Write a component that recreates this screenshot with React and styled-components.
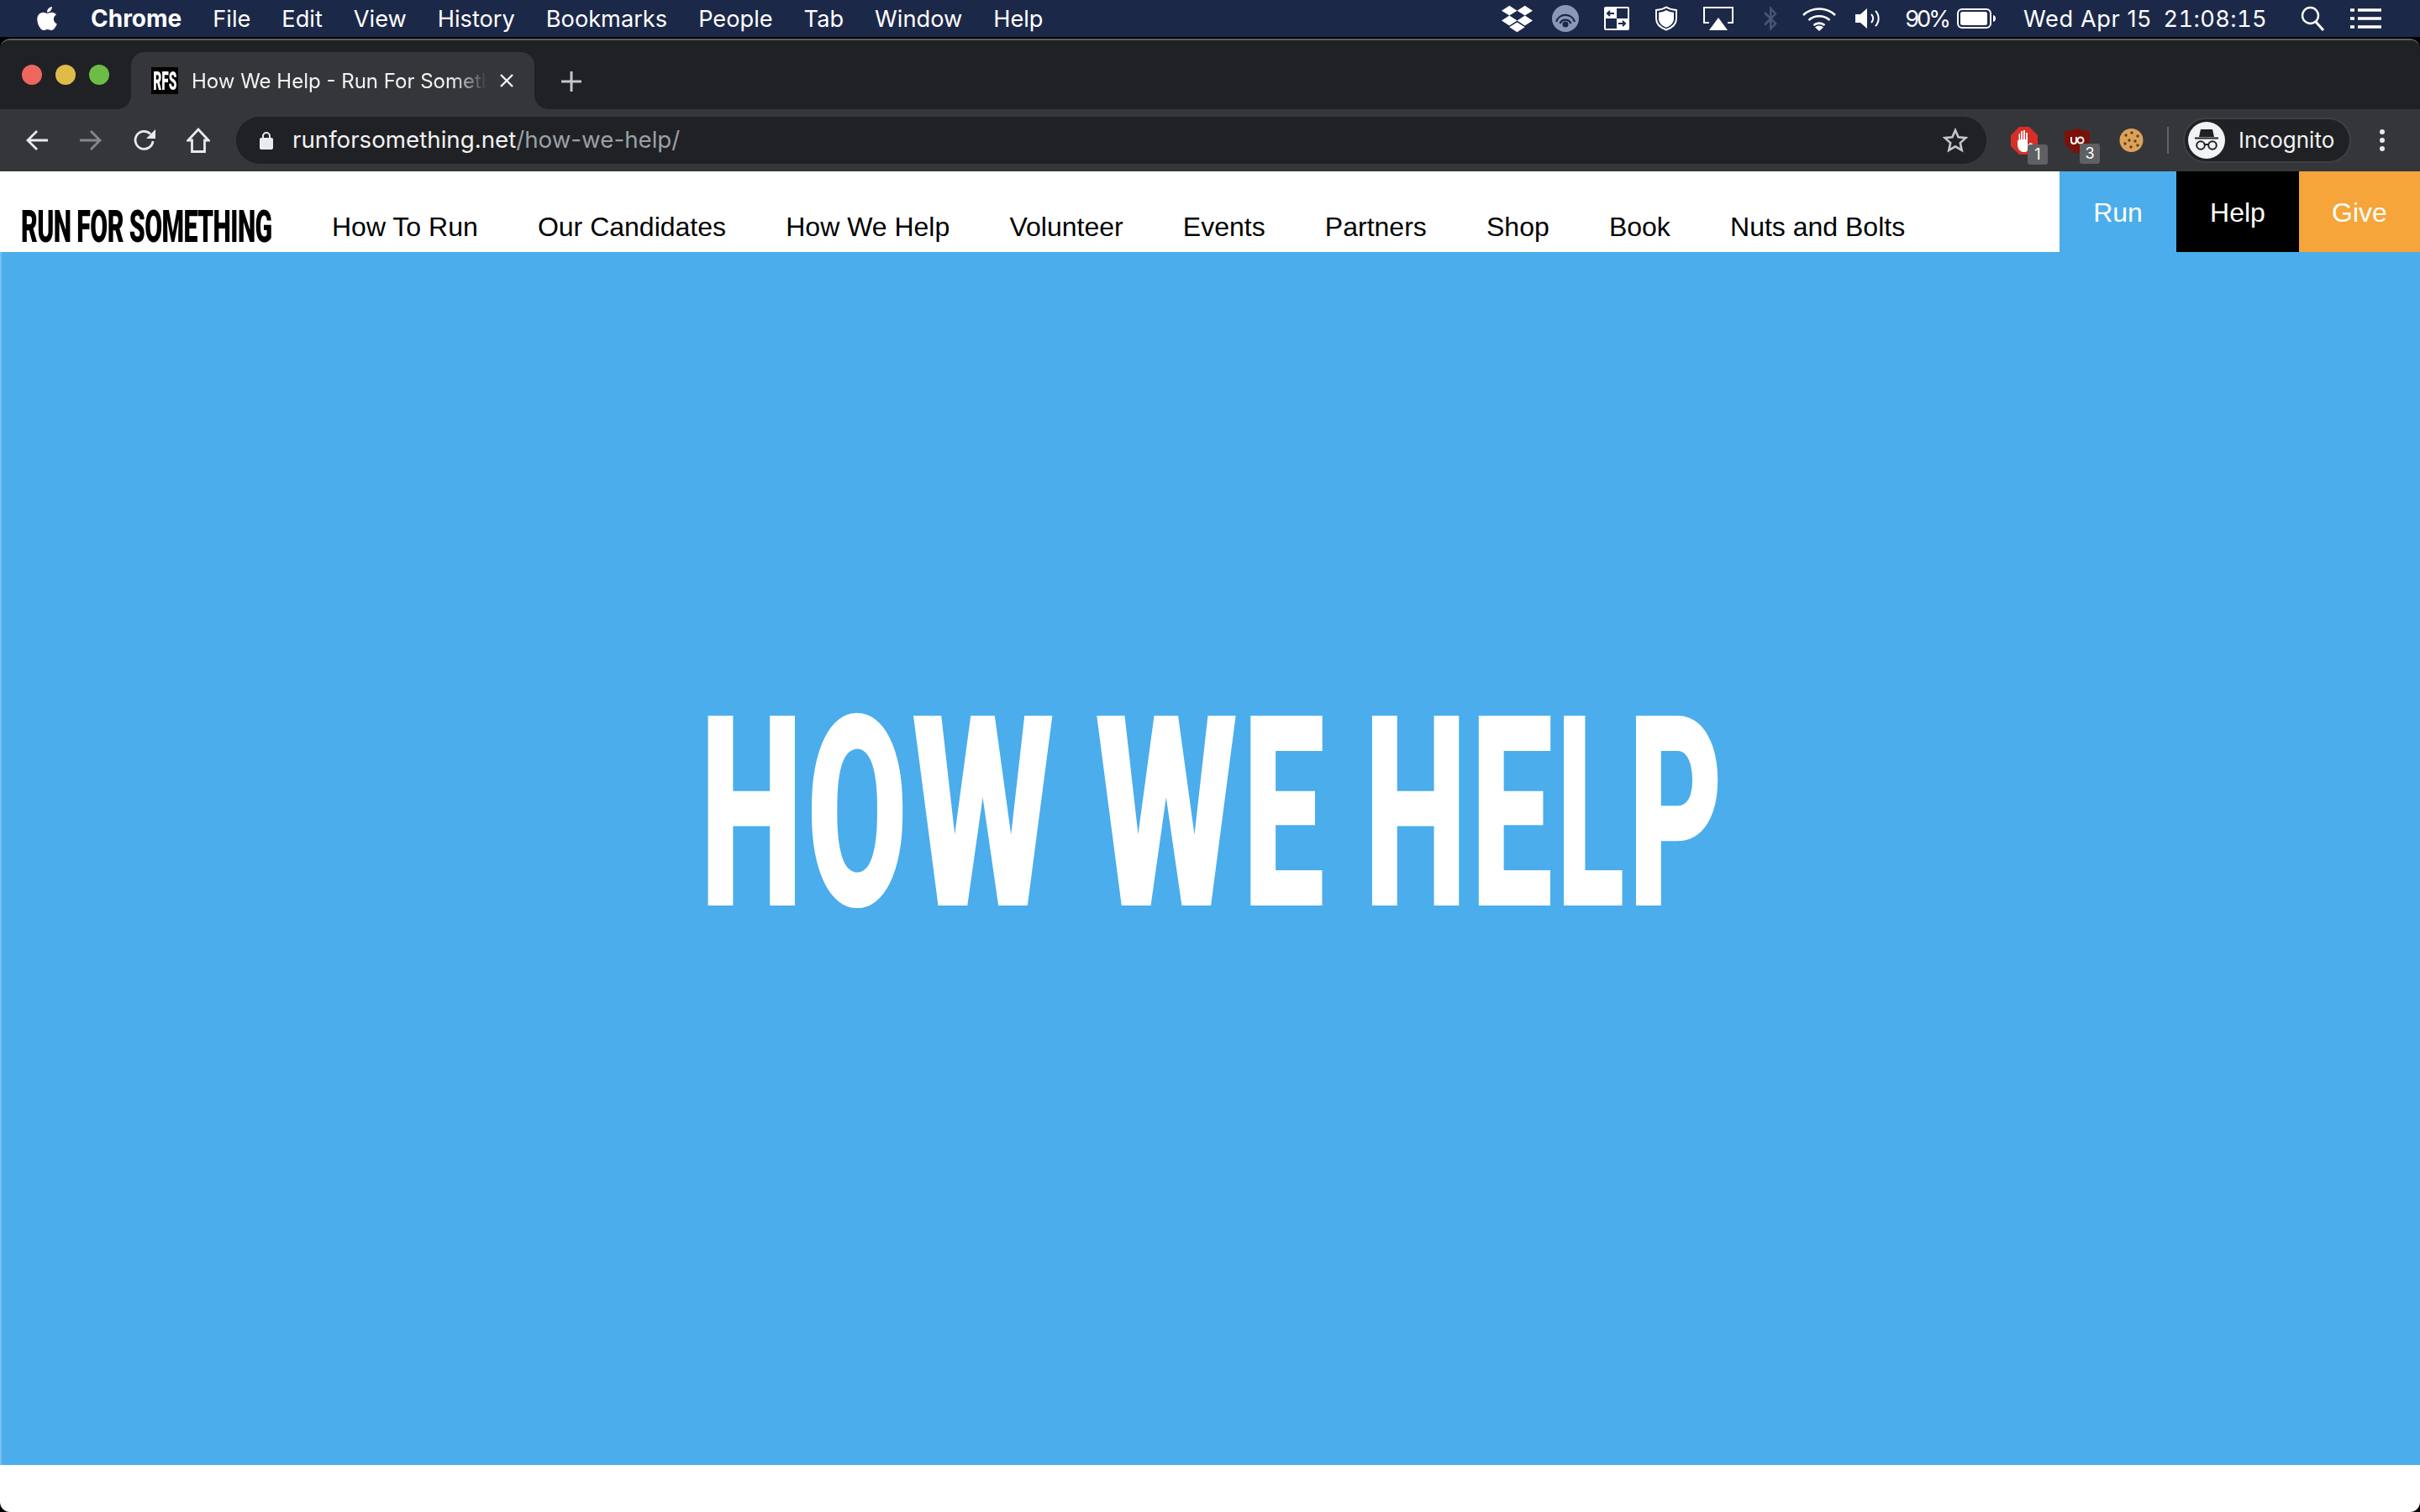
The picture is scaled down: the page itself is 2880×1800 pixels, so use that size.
import React from 'react'
import styled, { createGlobalStyle } from 'styled-components'
import { FaApple, FaDropbox, FaBluetoothB } from 'react-icons/fa'

const BLUE = '#4badeb'
const UI_FONT = '"Inter", "Liberation Sans", sans-serif'

const GlobalStyle = createGlobalStyle`
  html, body {
    margin: 0;
    padding: 0;
    background: #000;
  }
  * {
    box-sizing: border-box;
  }
`

const Desktop = styled.div`
  width: 2880px;
  height: 1800px;
  background: #000;
  display: flex;
  flex-direction: column;
  overflow: hidden;
  font-family: ${UI_FONT};
`

const MenuBar = styled.header`
  height: 44px;
  flex: none;
  background: #1c2848;
  color: #fff;
  display: flex;
  align-items: center;
  padding: 0 46px 0 40px;
`

const MenuItem = styled.span`
  font-size: ${({ $bold }) => ($bold ? 28 : 27.2)}px;
  font-weight: ${({ $bold }) => ($bold ? 700 : 400)};
  margin-left: ${({ $ml }) => $ml}px;
  letter-spacing: ${({ $track }) => $track || 0}px;
  font-variant-numeric: ${({ $tabular }) => ($tabular ? 'tabular-nums' : 'normal')};
  white-space: nowrap;
`

const Spacer = styled.div`
  flex: 1;
`

const Slot = styled.span`
  display: flex;
  flex: none;
  margin-left: ${({ $ml }) => $ml}px;
  color: ${({ $color }) => $color || '#fff'};
`

const Window = styled.div`
  flex: 1;
  margin-top: 2px;
  border-radius: 12px;
  border-top: 2px solid #5c5d60;
  overflow: hidden;
  display: flex;
  flex-direction: column;
  min-height: 0;
`

const TabStrip = styled.div`
  height: 82px;
  flex: none;
  background: #202124;
  display: flex;
  align-items: flex-end;
  padding-left: 26px;
`

const Light = styled.span`
  width: 24px;
  height: 24px;
  border-radius: 50%;
  background: ${({ $color }) => $color};
  margin-right: 16px;
  align-self: flex-start;
  margin-top: 29px;
  flex: none;
`

const Tab = styled.div`
  position: relative;
  width: 480px;
  height: 68px;
  margin-left: 10px;
  background: #35363a;
  border-radius: 16px 16px 0 0;
  display: flex;
  align-items: center;
  padding-left: 24px;
  color: #f1f3f4;

  &::before,
  &::after {
    content: '';
    position: absolute;
    bottom: 0;
    width: 16px;
    height: 16px;
  }
  &::before {
    left: -16px;
    background: radial-gradient(circle at 0 0, #202124 15.5px, #35363a 16px);
  }
  &::after {
    right: -16px;
    background: radial-gradient(circle at 100% 0, #202124 15.5px, #35363a 16px);
  }
`

const Favicon = styled.span`
  width: 32px;
  height: 32px;
  flex: none;
  background: #000;
  color: #fff;
  display: flex;
  align-items: center;
  justify-content: center;
`

const FaviconText = styled.span`
  font-family: "Roboto", sans-serif;
  font-weight: 900;
  font-size: 31px;
  transform: scaleX(0.5);
  white-space: nowrap;
`

const TabTitle = styled.span`
  width: 352px;
  margin-left: 16px;
  font-size: 24px;
  white-space: nowrap;
  overflow: hidden;
  -webkit-mask-image: linear-gradient(to right, #000 88%, transparent 100%);
  mask-image: linear-gradient(to right, #000 88%, transparent 100%);
`

const TabClose = styled.span`
  display: flex;
  margin-left: 14px;
`

const NewTab = styled.span`
  display: flex;
  margin-left: 32px;
  align-self: center;
  margin-top: 16px;
`

const Toolbar = styled.div`
  height: 74px;
  flex: none;
  background: #35363a;
  display: flex;
  align-items: center;
  padding: 0 32px 0 30px;
`

const ToolIcon = styled.span`
  display: flex;
  flex: none;
  margin-left: ${({ $ml }) => $ml || 0}px;
`

const Omnibox = styled.div`
  width: 2083px;
  height: 56px;
  margin-left: 31px;
  flex: none;
  background: #202124;
  border-radius: 28px;
  display: flex;
  align-items: center;
  padding: 0 22px 0 28px;
`

const Url = styled.span`
  margin-left: 23px;
  padding-bottom: 3px;
  font-size: 27.7px;
  color: #f1f3f4;
  white-space: nowrap;
`

const UrlPath = styled.span`
  color: #9aa0a6;
`

const Extension = styled.span`
  position: relative;
  display: flex;
  flex: none;
  margin-left: ${({ $ml }) => $ml}px;
`

const Badge = styled.span`
  position: absolute;
  right: -12px;
  bottom: -12px;
  width: 24px;
  height: 24px;
  background: #5f6063;
  border-radius: 3px;
  color: #fff;
  font-size: 18px;
  display: flex;
  align-items: center;
  justify-content: center;
`

const Divider = styled.span`
  width: 2px;
  height: 32px;
  background: #5f6368;
  margin-left: 28px;
  flex: none;
`

const ProfilePill = styled.div`
  width: 200px;
  height: 54px;
  margin-left: 17px;
  flex: none;
  border-radius: 27px;
  background: #202124;
  border: 2px solid #3f4044;
  display: flex;
  align-items: center;
  padding-left: 4px;
  color: #f1f3f4;
  font-size: 26px;
`

const ProfileLabel = styled.span`
  margin-left: 16px;
  padding-bottom: 2px;
`

const Nav = styled.nav`
  height: 96px;
  flex: none;
  background: #fff;
  display: flex;
  font-family: "Liberation Sans", Arial, sans-serif;
`

const LogoBox = styled.a`
  width: 298px;
  margin-left: 25px;
  flex: none;
  display: flex;
  align-items: flex-start;
  padding-top: 40px;
  overflow: visible;
`

const LogoText = styled.span`
  font-family: "Roboto", sans-serif;
  font-weight: 900;
  font-size: 53px;
  line-height: 1;
  letter-spacing: -1px;
  color: #000;
  white-space: nowrap;
  transform: scaleX(0.571);
  transform-origin: left top;
`

const NavLinks = styled.div`
  display: flex;
  flex: 1;
  padding: 48px 0 0 72px;
  gap: 71.2px;
`

const NavLink = styled.a`
  font-size: 32px;
  line-height: 36px;
  color: #000;
  white-space: nowrap;
`

const ActionButton = styled.a`
  width: ${({ $w }) => $w}px;
  flex: none;
  background: ${({ $bg }) => $bg};
  color: #fff;
  font-size: 32px;
  display: flex;
  align-items: center;
  justify-content: center;
  padding-top: 2px;
`

const Hero = styled.main`
  flex: 1;
  min-height: 0;
  background: ${BLUE};
  border-left: 2px solid #74bff0;
  display: flex;
  align-items: center;
  justify-content: center;
  padding: 0 0 104px 7px;
`

const Heading = styled.h1`
  margin: 0;
  color: #fff;
  font-family: "Roboto", sans-serif;
  font-weight: 900;
  font-size: 318px;
  line-height: 1;
  letter-spacing: 8.6px;
  word-spacing: -10px;
  white-space: nowrap;
  transform: scaleX(0.547);
`

// the poster face has wider Ws and a narrower L than Roboto, so those letters get their own squeeze
const WideW = styled.span`
  display: inline-block;
  margin: 0 0.057em;
  transform: scaleX(1.125);
`

const NarrowL = styled.span`
  display: inline-block;
  margin: 0 -0.04em;
  transform: scaleX(0.85);
`

const Footer = styled.div`
  height: 56px;
  flex: none;
  background: #fff;
`

const Circle = () => (
  <svg width="32" height="32" viewBox="0 0 32 32">
    <circle cx="16" cy="16" r="16" fill="#8a97b5" />
    <path d="M5 20a11.500 11.500 0 0 1 22 0M9.500 22a7 7 0 0 1 13 0" fill="none" stroke="#1c2848" strokeWidth="2.200" />
    <circle cx="16" cy="23" r="3.500" fill="#1c2848" />
  </svg>
)

const SplitBox = () => (
  <svg width="30" height="28" viewBox="0 0 30 28">
    <rect width="30" height="28" rx="2" fill="#fff" />
    <rect x="2" y="14" width="13" height="12" fill="#1c2848" />
    <rect x="15" y="2" width="13" height="12" fill="#1c2848" />
    <path d="M4 8h8M7 5 4 8l3 3" fill="none" stroke="#1c2848" strokeWidth="2" />
    <path d="M17 20h8M22 17l3 3-3 3" fill="none" stroke="#1c2848" strokeWidth="2" />
  </svg>
)

const ShieldIcon = () => (
  <svg width="28" height="30" viewBox="0 0 28 30">
    <path d="M14 1.500c4 2.500 8 3.200 12 3.500v10c0 7-5 11-12 13.500C7 26 2 22 2 15V5c4-.3 8-1 12-3.500z" fill="none" stroke="#fff" strokeWidth="2" />
    <path d="M14 5c3 1.800 6 2.500 9 2.800V15c0 5.500-4 8.800-9 10.800C9 23.800 5 20.500 5 15V7.800c3-.3 6-1 9-2.800z" fill="#fff" />
  </svg>
)

const AirPlay = () => (
  <svg width="36" height="28" viewBox="0 0 36 28">
    <path d="M7 19H1V1h34v18h-6" fill="none" stroke="#fff" strokeWidth="2" />
    <path d="M18 13l11 15H7z" fill="#fff" />
  </svg>
)

const Wifi = () => (
  <svg width="42" height="30" viewBox="0 0 42 30">
    <path d="M2 11a28 28 0 0 1 38 0M8.500 17a19 19 0 0 1 25 0M14.500 23a10 10 0 0 1 13 0" fill="none" stroke="#fff" strokeWidth="2.600" />
    <path d="M21 30l-5-4.500a7 7 0 0 1 10 0z" fill="#fff" />
  </svg>
)

const Speaker = () => (
  <svg width="32" height="24" viewBox="0 0 32 24">
    <path d="M0 7h6l8-7v24l-8-7H0z" fill="#fff" />
    <path d="M19 7a7 7 0 0 1 0 10M24 3a13 13 0 0 1 0 18" fill="none" stroke="#fff" strokeWidth="2" />
  </svg>
)

const Battery = () => (
  <svg width="46" height="24" viewBox="0 0 46 24">
    <rect x="1" y="1" width="39" height="22" rx="5" fill="none" stroke="#fff" strokeWidth="2" />
    <rect x="4" y="4" width="32" height="16" rx="2.500" fill="#fff" />
    <path d="M43 8c2 .5 3 2 3 4s-1 3.500-3 4z" fill="#fff" />
  </svg>
)

const SearchIcon = () => (
  <svg width="29" height="30" viewBox="0 0 29 30">
    <circle cx="11.500" cy="11.500" r="9.500" fill="none" stroke="#fff" strokeWidth="2.400" />
    <path d="M18 19l9 10" stroke="#fff" strokeWidth="3" />
  </svg>
)

const ListIcon = () => (
  <svg width="37" height="24" viewBox="0 0 37 24">
    <path d="M0 2h5M9 2h28M0 12h5M9 12h28M0 22h5M9 22h28" stroke="#fff" strokeWidth="3.400" />
  </svg>
)

const CloseIcon = () => (
  <svg width="18" height="18" viewBox="0 0 18 18">
    <path d="M2 2l14 14M16 2 2 16" stroke="#f1f3f4" strokeWidth="2.400" />
  </svg>
)

const PlusIcon = () => (
  <svg width="24" height="24" viewBox="0 0 24 24">
    <path d="M12 0v24M0 12h24" stroke="#c4c7ca" strokeWidth="3" />
  </svg>
)

const Arrow = ({ color, flip }) => (
  <svg width="28" height="26" viewBox="0 0 28 26" style={flip ? { transform: 'scaleX(-1)' } : undefined}>
    <path d="M27 13H3M14 2 3 13l11 11" fill="none" stroke={color} strokeWidth="2.800" />
  </svg>
)

const Reload = () => (
  <svg width="28" height="28" viewBox="0 0 28 28">
    <path d="M24 15a10.500 10.500 0 1 1-3-8.500" fill="none" stroke="#e8eaed" strokeWidth="2.800" />
    <path d="M27 1v11H16z" fill="#e8eaed" />
  </svg>
)

const Home = () => (
  <svg width="28" height="30" viewBox="0 0 28 30">
    <path d="M14 2 2 15h4.500v13.500h15V15H26z" fill="none" stroke="#e8eaed" strokeWidth="2.800" strokeLinejoin="miter" />
  </svg>
)

const Lock = () => (
  <svg width="16" height="22" viewBox="0 0 16 22">
    <path d="M4 9V6a4 4 0 0 1 8 0v3" fill="none" stroke="#e8eaed" strokeWidth="2" />
    <rect y="8" width="16" height="14" rx="2" fill="#e8eaed" />
  </svg>
)

const Star = () => (
  <svg width="30" height="30" viewBox="0 0 30 30">
    <path d="M15 3l3.600 8.200 8.900.9-6.700 6 1.900 8.800L15 22.300 7.300 26.900l1.900-8.800-6.700-6 8.900-.9z" fill="none" stroke="#c4c7ca" strokeWidth="2.600" />
  </svg>
)

const StopSign = () => (
  <svg width="32" height="33" viewBox="0 0 32 33">
    <path d="M10 0h12l10 10v13L22 33H10L0 23V10z" fill="#d62f25" />
    <path d="M8 14v7c0 5 3 9 7 9h3c3-2 6-7 8-10l-3-1-3 3V7l-2 0v8h-1V4h-2v11h-1V5h-2v10h-1V8H9.500v8H8z" fill="#fff" />
  </svg>
)

const UblockShield = () => (
  <svg width="30" height="31" viewBox="0 0 30 31">
    <path d="M15 0c4 3 9 4 15 4v10c0 8-6 13-15 17C6 27 0 22 0 14V4c6 0 11-1 15-4z" fill="#7a120b" />
    <path d="M8 11v5a3 3 0 0 0 6 0v-5" fill="none" stroke="#fff" strokeWidth="2" />
    <circle cx="19" cy="15" r="3.500" fill="none" stroke="#fff" strokeWidth="2" />
  </svg>
)

const Cookie = () => (
  <svg width="29" height="28" viewBox="0 0 29 28">
    <circle cx="14.500" cy="14" r="14" fill="#dba25a" />
    {[[8, 8], [15, 5], [22, 9], [12, 14], [19, 15], [7, 18], [14, 22], [22, 20]].map(([cx, cy]) => (
      <circle key={`${cx}-${cy}`} cx={cx} cy={cy} r="1.700" fill="#6a3c16" />
    ))}
  </svg>
)

const IncognitoFace = () => (
  <svg width="44" height="44" viewBox="0 0 44 44">
    <circle cx="22" cy="22" r="22" fill="#f1f3f4" />
    <path d="M15 9h14l2 9H13z" fill="#202124" />
    <path d="M8 19.500h28" stroke="#202124" strokeWidth="2" />
    <circle cx="15" cy="28" r="4.800" fill="none" stroke="#202124" strokeWidth="2" />
    <circle cx="29" cy="28" r="4.800" fill="none" stroke="#202124" strokeWidth="2" />
    <path d="M19.500 27h5" stroke="#202124" strokeWidth="2" />
  </svg>
)

const Kebab = () => (
  <svg width="6" height="26" viewBox="0 0 6 26">
    <circle cx="3" cy="3" r="3" fill="#e8eaed" />
    <circle cx="3" cy="13" r="3" fill="#e8eaed" />
    <circle cx="3" cy="23" r="3" fill="#e8eaed" />
  </svg>
)

const MENUS = ['File', 'Edit', 'View', 'History', 'Bookmarks', 'People', 'Tab', 'Window', 'Help']

const LINKS = [
  'How To Run', 'Our Candidates', 'How We Help', 'Volunteer', 'Events',
  'Partners', 'Shop', 'Book', 'Nuts and Bolts',
]

const App = () => (
  <Desktop>
    <GlobalStyle />
    <MenuBar>
      <Slot><FaApple size={32} /></Slot>
      <MenuItem $bold $ml={36}>Chrome</MenuItem>
      {MENUS.map(label => <MenuItem key={label} $ml={37}>{label}</MenuItem>)}
      <Spacer />
      <Slot><FaDropbox size={37} /></Slot>
      <Slot $ml={23}><Circle /></Slot>
      <Slot $ml={30}><SplitBox /></Slot>
      <Slot $ml={30}><ShieldIcon /></Slot>
      <Slot $ml={30}><AirPlay /></Slot>
      <Slot $ml={29} $color="#4a5570"><FaBluetoothB size={30} /></Slot>
      <Slot $ml={22}><Wifi /></Slot>
      <Slot $ml={22}><Speaker /></Slot>
      <MenuItem $ml={27} $track={-3}>90%</MenuItem>
      <Slot $ml={10}><Battery /></Slot>
      <MenuItem $ml={33} $track={0.6}>Wed Apr 15</MenuItem>
      <MenuItem $ml={14} $track={0.4} $tabular>21:08:15</MenuItem>
      <Slot $ml={40}><SearchIcon /></Slot>
      <Slot $ml={30}><ListIcon /></Slot>
    </MenuBar>
    <Window>
      <TabStrip>
        <Light $color="#ee665e" />
        <Light $color="#dfbb4a" />
        <Light $color="#6cbd45" />
        <Tab>
          <Favicon><FaviconText>RFS</FaviconText></Favicon>
          <TabTitle>How We Help - Run For Something</TabTitle>
          <TabClose><CloseIcon /></TabClose>
        </Tab>
        <NewTab><PlusIcon /></NewTab>
      </TabStrip>
      <Toolbar>
        <ToolIcon><Arrow color="#e8eaed" /></ToolIcon>
        <ToolIcon $ml={36}><Arrow color="#85878a" flip /></ToolIcon>
        <ToolIcon $ml={36}><Reload /></ToolIcon>
        <ToolIcon $ml={36}><Home /></ToolIcon>
        <Omnibox>
          <Lock />
          <Url>runforsomething.net<UrlPath>/how-we-help/</UrlPath></Url>
          <Spacer />
          <Star />
        </Omnibox>
        <Extension $ml={29}><StopSign /><Badge>1</Badge></Extension>
        <Extension $ml={32}><UblockShield /><Badge>3</Badge></Extension>
        <Extension $ml={35}><Cookie /></Extension>
        <Divider />
        <ProfilePill>
          <IncognitoFace />
          <ProfileLabel>Incognito</ProfileLabel>
        </ProfilePill>
        <ToolIcon $ml={34}><Kebab /></ToolIcon>
      </Toolbar>
      <Nav>
        <LogoBox><LogoText>RUN FOR SOMETHING</LogoText></LogoBox>
        <NavLinks>
          {LINKS.map(link => <NavLink key={link}>{link}</NavLink>)}
        </NavLinks>
        <ActionButton $w={139} $bg={BLUE}>Run</ActionButton>
        <ActionButton $w={146} $bg="#000">Help</ActionButton>
        <ActionButton $w={144} $bg="#f5a53a">Give</ActionButton>
      </Nav>
      <Hero>
        <Heading>HO<WideW>W</WideW> <WideW>W</WideW>E HE<NarrowL>L</NarrowL>P</Heading>
      </Hero>
      <Footer />
    </Window>
  </Desktop>
)

export default App
